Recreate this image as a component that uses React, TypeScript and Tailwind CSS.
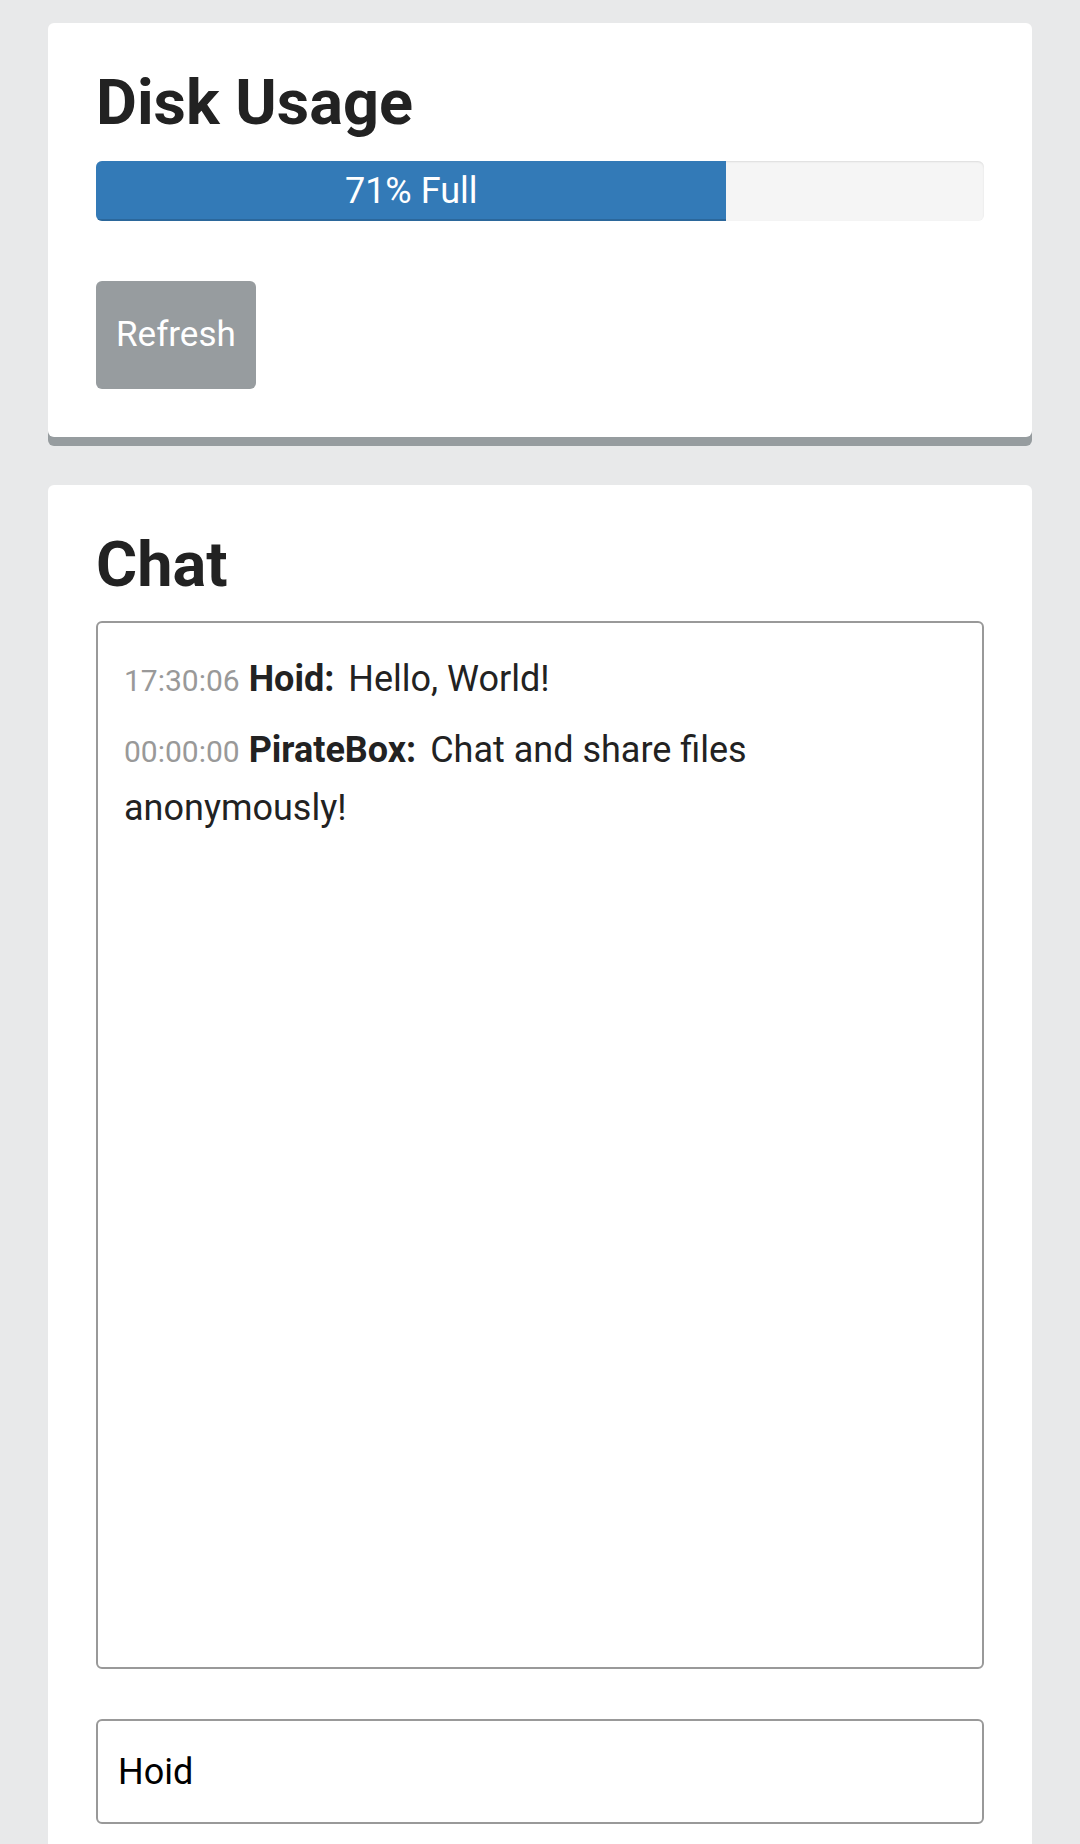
export default function App() {
  return (
    <div className="min-h-[1844px] bg-[#e8e9ea] px-12 pt-[23px] font-['Roboto','Liberation_Sans',sans-serif] text-[#222]">
      {/* disk usage card */}
      <section className="mb-12 rounded-md bg-white p-12 shadow-[0_9px_0_#969c9f]">
        <h2 className="mb-[27px] text-[63px] font-bold leading-[63px]">Disk Usage</h2>
        <div className="flex h-[60px] overflow-hidden rounded-md bg-[#f5f5f5] shadow-[inset_0_1px_2px_rgba(0,0,0,0.1)]">
          <div className="flex w-[71%] items-center justify-center bg-[#337ab7] text-[36px] text-white shadow-[inset_0_-2px_0_rgba(0,0,0,0.15)]">
            71% Full
          </div>
        </div>
        <button className="mt-[60px] block h-[108px] rounded-md bg-[#979c9f] px-5 text-[35px] text-white">
          Refresh
        </button>
      </section>

      {/* chat card */}
      <section className="rounded-t-md bg-white px-12 pt-12 pb-8">
        <h2 className="mb-[25px] text-[63px] font-bold leading-[63px]">Chat</h2>
        <div className="h-[1048px] rounded-md border-2 border-[#999] px-[26px] pt-[28px] text-[36px] leading-[56px]">
          <p className="mb-[13px]">
            <span className="text-[30px] text-[#999]">17:30:06</span>{" "}
            <b className="mr-[5px] font-bold">Hoid:</b> Hello, World!
          </p>
          <p>
            <span className="text-[30px] text-[#999]">00:00:00</span>{" "}
            <b className="mr-[5px] font-bold">PirateBox:</b> Chat and share files anonymously!
          </p>
        </div>
        <input
          className="mt-[50px] block h-[105px] w-full rounded-md border-2 border-[#999] px-5 text-[36px] text-black outline-none"
          defaultValue="Hoid"
        />
      </section>
    </div>
  );
}
